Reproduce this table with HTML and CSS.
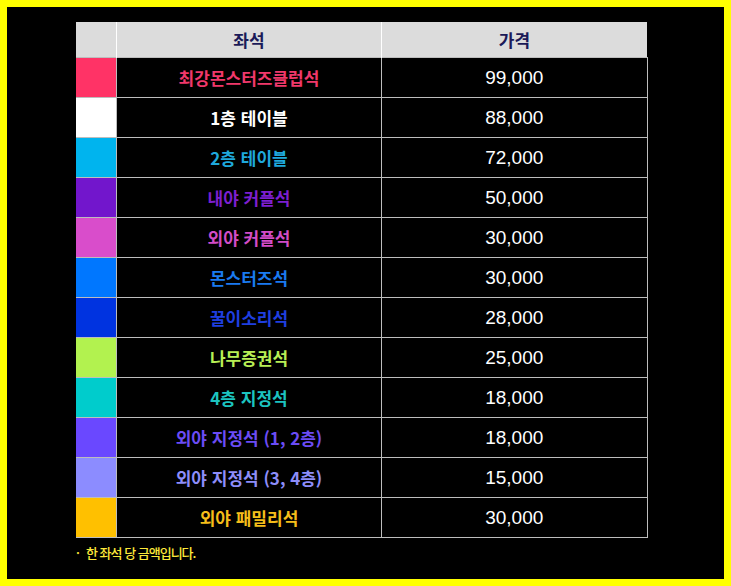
FILE: index.html
```html
<!DOCTYPE html>
<html lang="ko">
<head>
<meta charset="utf-8">
<title>좌석 가격</title>
<link rel="stylesheet" href="styles.css">
</head>
<body>
<div class="frame">
  <table class="price-table">
    <thead>
      <tr>
        <th class="sw-col"></th>
        <th class="name-col">좌석</th>
        <th class="price-col">가격</th>
      </tr>
    </thead>
    <tbody>
      <tr><td class="sw c1"></td><td class="name t1">최강몬스터즈클럽석</td><td class="price">99,000</td></tr>
      <tr><td class="sw c2"></td><td class="name t2">1층 테이블</td><td class="price">88,000</td></tr>
      <tr><td class="sw c3"></td><td class="name t3">2층 테이블</td><td class="price">72,000</td></tr>
      <tr><td class="sw c4"></td><td class="name t4">내야 커플석</td><td class="price">50,000</td></tr>
      <tr><td class="sw c5"></td><td class="name t5">외야 커플석</td><td class="price">30,000</td></tr>
      <tr><td class="sw c6"></td><td class="name t6">몬스터즈석</td><td class="price">30,000</td></tr>
      <tr><td class="sw c7"></td><td class="name t7">꿀이소리석</td><td class="price">28,000</td></tr>
      <tr><td class="sw c8"></td><td class="name t8">나무증권석</td><td class="price">25,000</td></tr>
      <tr><td class="sw c9"></td><td class="name t9">4층 지정석</td><td class="price">18,000</td></tr>
      <tr><td class="sw c10"></td><td class="name t10">외야 지정석 (1, 2층)</td><td class="price">18,000</td></tr>
      <tr><td class="sw c11"></td><td class="name t11">외야 지정석 (3, 4층)</td><td class="price">15,000</td></tr>
      <tr><td class="sw c12"></td><td class="name t12">외야 패밀리석</td><td class="price">30,000</td></tr>
    </tbody>
  </table>
  <p class="note"><span class="dot">·</span>한 좌석 당 금액입니다.</p>
</div>
</body>
</html>
```

FILE: styles.css
```css
html, body {
  margin: 0;
  padding: 0;
  background: #000;
}

.frame {
  box-sizing: border-box;
  width: 731px;
  height: 586px;
  border: 7px solid #ffff00;
  background: #000;
  padding: 15px 0 0 69px;
  font-family: "Noto Sans CJK KR", "Liberation Sans", sans-serif;
}

.price-table {
  border-collapse: collapse;
  table-layout: fixed;
  width: 571px;
}

.price-table th {
  background: #dcdcdc;
  color: #1b1a58;
  font-size: 17px;
  font-weight: 700;
  height: 35px;
  padding: 0;
  border-left: 1px solid #ffffff;
  text-align: center;
  line-height: 1;
}

.price-table th:first-child {
  border-left: none;
}

.sw-col { width: 40px; }
.name-col { width: 264px; }
.price-col { width: 265px; }

.price-table td {
  border: 1px solid #bdbdbd;
  height: 40px;
  box-sizing: border-box;
  padding: 0;
  text-align: center;
  line-height: 1;
}

.price-table td.sw {
  border-left: none;
}

.name {
  font-size: 17px;
  font-weight: 700;
}

.price {
  font-family: "Liberation Sans", Arial, sans-serif;
  font-size: 19px;
  color: #ffffff;
}

.c1 { background: #ff3366; }
.c2 { background: #ffffff; }
.c3 { background: #00b4ee; }
.c4 { background: #7216cc; }
.c5 { background: #d94dcb; }
.c6 { background: #0077ff; }
.c7 { background: #0033e0; }
.c8 { background: #b2f24f; }
.c9 { background: #00cccc; }
.c10 { background: #6a48ff; }
.c11 { background: #8c8cff; }
.c12 { background: #ffc000; }

.t1 { color: #f0386b; }
.t2 { color: #ffffff; }
.t3 { color: #1fa8dc; }
.t4 { color: #7d1fd0; }
.t5 { color: #d24cc8; }
.t6 { color: #1a7af0; }
.t7 { color: #1f3fe0; }
.t8 { color: #b8ef55; }
.t9 { color: #1cc4c0; }
.t10 { color: #6b4cf5; }
.t11 { color: #8d8dfa; }
.t12 { color: #f5be1a; }

.note {
  margin: 7px 0 0 0;
  color: #fde93a;
  font-size: 13px;
  font-weight: 500;
  line-height: 16px;
  letter-spacing: -1px;
}

.dot {
  display: inline-block;
  width: 10px;
}
```
